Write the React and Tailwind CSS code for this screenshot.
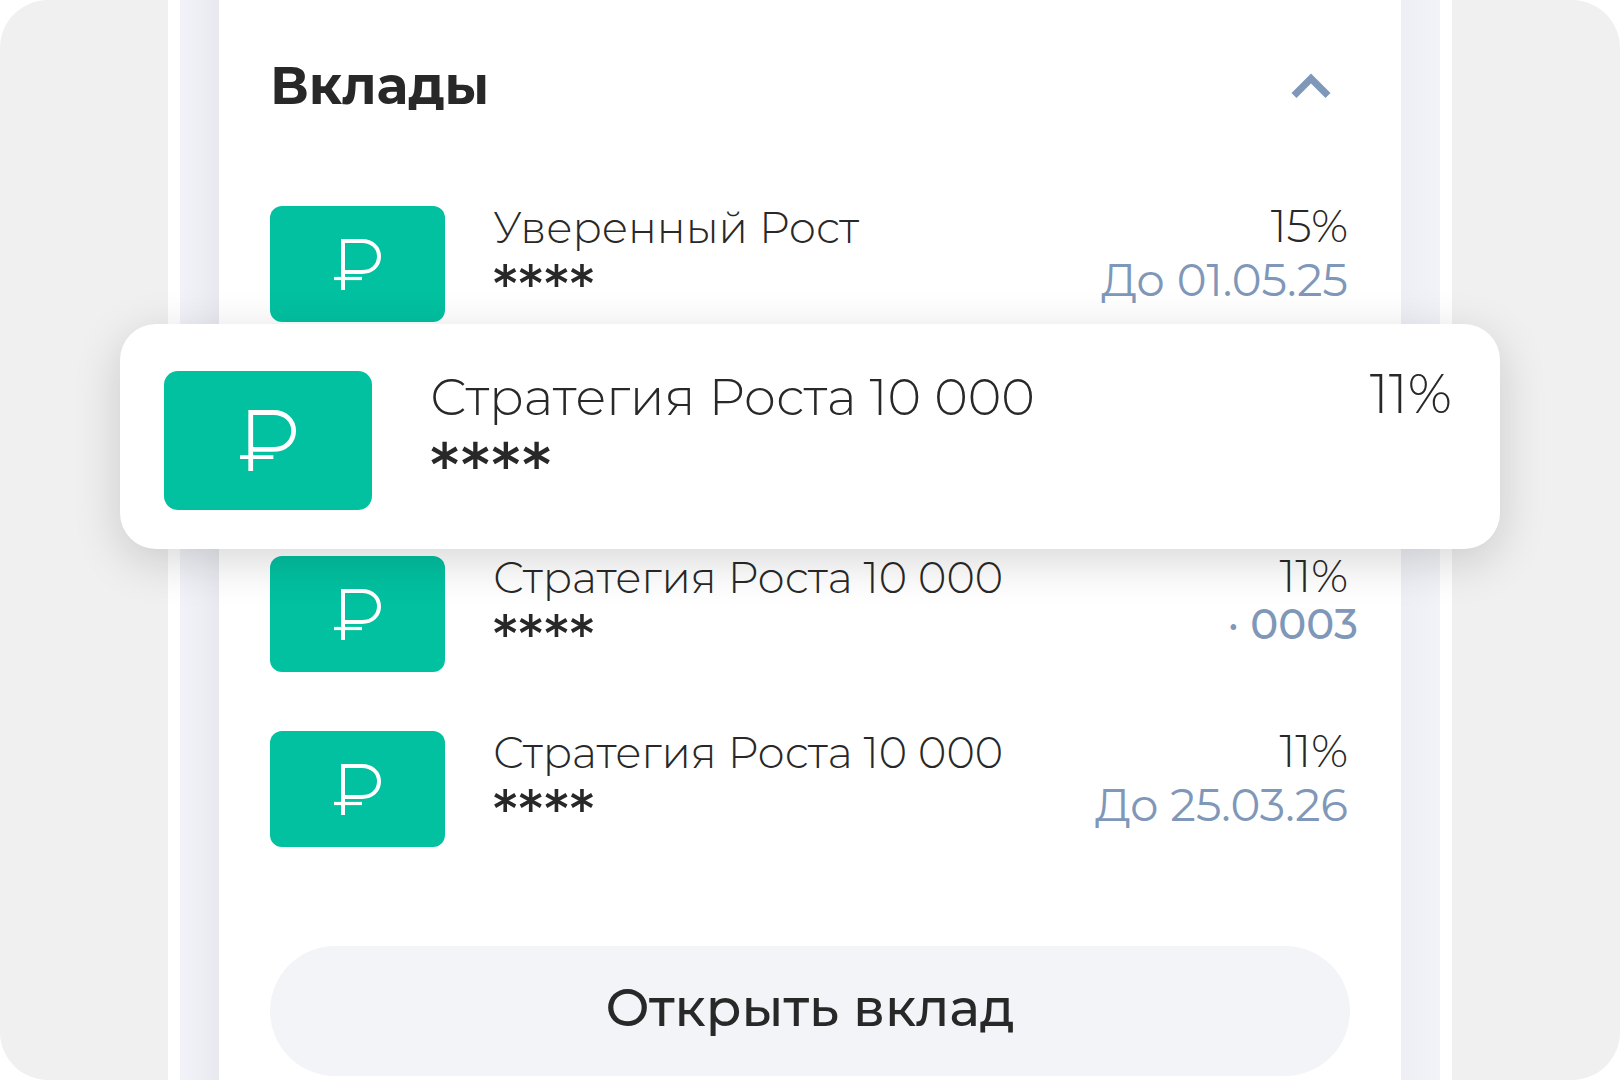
import React, { useState } from "react";

// Depósitos del cliente
const deposits = [
    { id: 1, name: "Уверенный Рост", mask: "****", rate: "15%", until: "До 01.05.25" },
    { id: 2, name: "Стратегия Роста 10 000", mask: "****", rate: "11%", featured: true },
    { id: 3, name: "Стратегия Роста 10 000", mask: "****", rate: "11%", account: "· 0003" },
    { id: 4, name: "Стратегия Роста 10 000", mask: "****", rate: "11%", until: "До 25.03.26" },
];

function RubleIcon({ className }) {
    return (
        <svg viewBox="0 0 47 51" className={className} fill="none" stroke="currentColor" strokeWidth="4" aria-hidden="true">
            <path d="M9 51V2H28C38 2 45 8.500 45 17.500C45 26.500 38 33 28 33H9" />
            <path d="M0 39.500H28" strokeWidth="3.200" />
        </svg>
    );
}

function DepositRow({ deposit }) {
    return (
        <li className="flex h-[116px] items-start justify-between">
            <div className="flex">
                <div className="mr-12 flex h-[116px] w-[175px] shrink-0 items-center justify-center rounded-xl bg-[#02c1a0] text-white">
                    <RubleIcon className="h-[51px] w-[47px]" />
                </div>
                <div>
                    <p className="text-[43px] font-light leading-[44px]">{deposit.name}</p>
                    <p className="text-[61px] font-medium leading-[76px]">{deposit.mask}</p>
                </div>
            </div>
            <div className="pr-0.5 text-right">
                <p className="text-[45px] font-light leading-[40px]">{deposit.rate}</p>
                {deposit.until && <p className="text-[45px] leading-[68px] text-[#7f97b8]">{deposit.until}</p>}
                {deposit.account && (
                    <p className="-mr-2.5 text-[42px] font-medium leading-[56px] text-[#7f97b8]">{deposit.account}</p>
                )}
            </div>
        </li>
    );
}

// Tarjeta destacada, flota por encima de la lista
function FeaturedRow({ deposit }) {
    return (
        <li className="relative h-[116px]">
            <div className="absolute inset-x-[-150px] top-[-57px] z-10 flex items-start justify-between rounded-[36px] bg-white pt-[47px] pr-12 pb-8 pl-11 shadow-[0_12px_48px_rgba(0,0,0,0.16)]">
                <div className="flex">
                    <div className="mr-[58px] flex h-[139px] w-[208px] shrink-0 items-center justify-center rounded-[14px] bg-[#02c1a0] text-white">
                        <RubleIcon className="h-[61px] w-[56px]" />
                    </div>
                    <div>
                        <p className="text-[51px] font-light leading-[52px]">{deposit.name}</p>
                        <p className="text-[73px] font-medium leading-[94px]">{deposit.mask}</p>
                    </div>
                </div>
                <p className="text-[54px] font-light leading-[46px]">{deposit.rate}</p>
            </div>
        </li>
    );
}

function App() {
    const [open, setOpen] = useState(true);

    return (
        <div className="bg-white font-['Montserrat','Inter',sans-serif] text-[#282828]">
            <div className="min-h-screen overflow-hidden rounded-[48px] bg-[#f0f0f0] px-[168px]">
                <div className="flex min-h-screen border-x-12 border-white">
                    <div className="w-[39px] shrink-0 bg-linear-to-r from-[#f2f3f8] via-[#eeeff4] to-[#e8e9ee]" />

                    <section className="min-w-0 flex-1 bg-white px-[51px] pt-[56px] pb-1">
                        <div className="flex items-center justify-between pr-[17px]">
                            <h2 className="text-[52px] font-bold leading-[60px]">Вклады</h2>
                            <button type="button" aria-label="Свернуть" aria-expanded={open} onClick={() => setOpen(!open)} className="text-[#7f97b8]">
                                <svg viewBox="0 0 44 28" className="h-[28px] w-[44px]" fill="none" stroke="currentColor" strokeWidth="7" aria-hidden="true">
                                    <path d="M5 23.500L22 6.500L39 23.500" />
                                </svg>
                            </button>
                        </div>

                        {open && (
                            <ul className="mt-[90px] flex flex-col gap-[59px]">
                                {deposits.map((d) =>
                                    d.featured ? <FeaturedRow key={d.id} deposit={d} /> : <DepositRow key={d.id} deposit={d} />
                                )}
                            </ul>
                        )}

                        <button type="button" className="mt-[99px] h-[130px] w-full rounded-full bg-[#f3f4f8] pb-1.5 text-[52px] font-medium leading-[60px]">
                            Открыть вклад
                        </button>
                    </section>

                    <div className="w-[39px] shrink-0 bg-linear-to-r from-[#eeeff4] to-[#f2f3f8]" />
                </div>
            </div>
        </div>
    );
}

export default App;
